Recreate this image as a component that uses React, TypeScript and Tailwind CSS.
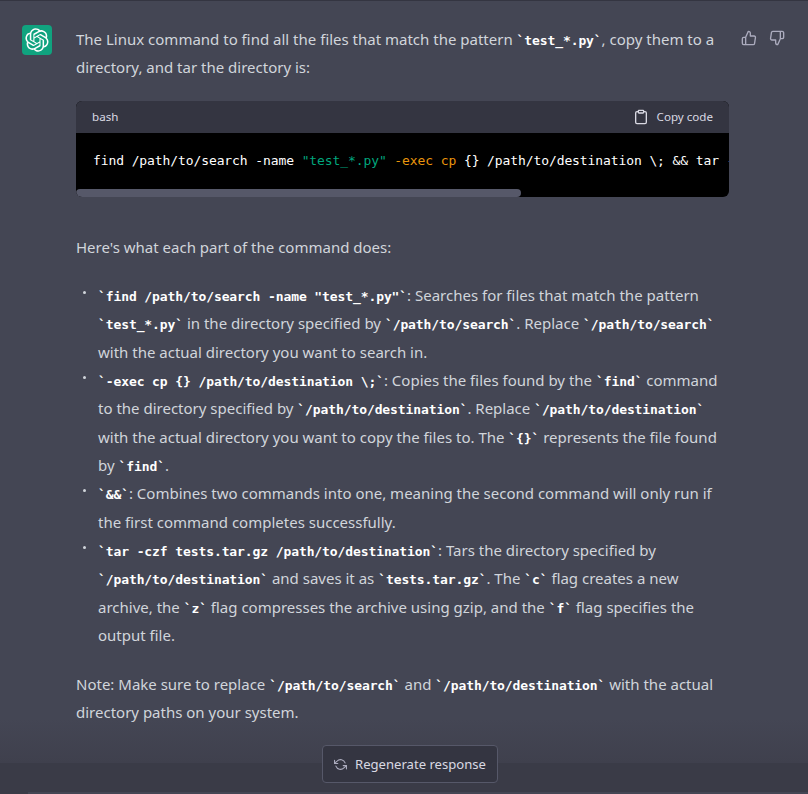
const M = ({ children }: { children: React.ReactNode }) => (
  <code className="font-['DejaVu_Sans_Mono','Liberation_Mono',monospace] font-bold text-white text-[13px] leading-[14px] tracking-[-0.1px]">`{children}`</code>
);

const Logo = () => (
  <svg viewBox="0 0 41 41" width="24" height="24" fill="none">
    <path fill="currentColor" d="M37.5324 16.8707C37.9808 15.5241 38.1363 14.0974 37.9886 12.6859C37.8409 11.2744 37.3934 9.91076 36.676 8.68622C35.6126 6.83404 33.9882 5.3676 32.0373 4.4985C30.0864 3.62941 27.9098 3.40259 25.8215 3.85078C24.8796 2.7893 23.7219 1.94125 22.4257 1.36341C21.1295 0.785575 19.7249 0.491269 18.3058 0.500197C16.1708 0.495044 14.0893 1.16803 12.3614 2.42214C10.6335 3.67624 9.34853 5.44666 8.6917 7.47815C7.30085 7.76286 5.98686 8.3414 4.8377 9.17505C3.68854 10.0087 2.73073 11.0782 2.02839 12.312C0.956464 14.1591 0.498905 16.2988 0.721698 18.4228C0.944492 20.5467 1.83612 22.5449 3.268 24.1293C2.81966 25.4759 2.66413 26.9026 2.81182 28.3141C2.95951 29.7256 3.40701 31.0892 4.12437 32.3138C5.18791 34.1659 6.8123 35.6322 8.76321 36.5013C10.7141 37.3704 12.8907 37.5973 14.9789 37.1492C15.9208 38.2107 17.0786 39.0587 18.3747 39.6366C19.6709 40.2144 21.0755 40.5087 22.4946 40.4998C24.6307 40.5054 26.7133 39.8321 28.4418 38.5772C30.1704 37.3223 31.4556 35.5506 32.1119 33.5179C33.5027 33.2332 34.8167 32.6547 35.9659 31.821C37.115 30.9874 38.0728 29.9178 38.7752 28.684C39.8458 26.8371 40.3023 24.6979 40.0789 22.5748C39.8556 20.4517 38.9639 18.4544 37.5324 16.8707ZM22.4978 37.8849C20.7443 37.8874 19.0459 37.2733 17.6994 36.1501C17.7601 36.117 17.8666 36.0586 17.936 36.0161L25.9004 31.4156C26.1003 31.3019 26.2663 31.137 26.3813 30.9378C26.4964 30.7386 26.5563 30.5124 26.5549 30.2825V19.0542L29.9213 20.998C29.9389 21.0068 29.9541 21.0198 29.9656 21.0359C29.977 21.052 29.9842 21.0707 29.9867 21.0902V30.3889C29.9842 32.375 29.1946 34.2791 27.7909 35.6841C26.3872 37.0892 24.4838 37.8806 22.4978 37.8849ZM6.39227 31.0064C5.51397 29.4888 5.19742 27.7107 5.49804 25.9832C5.55718 26.0187 5.66048 26.0818 5.73461 26.1244L13.699 30.7248C13.8975 30.8408 14.1233 30.902 14.3532 30.902C14.583 30.902 14.8088 30.8408 15.0073 30.7248L24.731 25.1103V28.9979C24.7321 29.0177 24.7283 29.0376 24.7199 29.0556C24.7115 29.0736 24.6988 29.0893 24.6829 29.1012L16.6317 33.7497C14.9096 34.7416 12.8643 35.0097 10.9447 34.4954C9.02506 33.9811 7.38785 32.7263 6.39227 31.0064ZM4.29707 13.6194C5.17156 12.0998 6.55279 10.9364 8.19885 10.3327C8.19885 10.4013 8.19491 10.5228 8.19491 10.6071V19.808C8.19351 20.0378 8.25334 20.2638 8.36823 20.4629C8.48312 20.6619 8.64893 20.8267 8.84863 20.9404L18.5723 26.5542L15.206 28.4979C15.1894 28.5089 15.1703 28.5155 15.1505 28.5173C15.1307 28.5191 15.1107 28.516 15.0924 28.5082L7.04046 23.8557C5.32135 22.8601 4.06716 21.2235 3.55289 19.3046C3.03862 17.3858 3.30624 15.3413 4.29707 13.6194ZM31.955 20.0556L22.2312 14.4411L25.5976 12.4981C25.6142 12.4872 25.6333 12.4805 25.6531 12.4787C25.6729 12.4769 25.6928 12.4801 25.7111 12.4879L33.7631 17.1364C34.9967 17.849 36.0017 18.8982 36.6606 20.1613C37.3194 21.4244 37.6047 22.849 37.4832 24.2684C37.3617 25.6878 36.8382 27.0432 35.9743 28.1759C35.1103 29.3086 33.9415 30.1717 32.6047 30.6641C32.6047 30.5947 32.6047 30.4733 32.6047 30.3889V21.188C32.6066 20.9586 32.5474 20.7328 32.4332 20.5338C32.319 20.3348 32.154 20.1698 31.955 20.0556ZM35.3055 15.0128C35.2464 14.9765 35.1431 14.9142 35.069 14.8717L27.1045 10.2712C26.906 10.1554 26.6803 10.0943 26.4504 10.0943C26.2206 10.0943 25.9948 10.1554 25.7963 10.2712L16.0726 15.8858V11.9982C16.0715 11.9783 16.0753 11.9585 16.0837 11.9405C16.0921 11.9225 16.1048 11.9068 16.1207 11.8949L24.1719 7.25025C25.4053 6.53903 26.8158 6.19376 28.2383 6.25482C29.6608 6.31589 31.0364 6.78077 32.2044 7.59508C33.3723 8.40939 34.2842 9.53945 34.8334 10.8531C35.3826 12.1667 35.5464 13.6095 35.3055 15.0128ZM14.2424 21.9419L10.8752 19.9981C10.8576 19.9893 10.8423 19.9763 10.8309 19.9602C10.8195 19.9441 10.8122 19.9254 10.8098 19.9058V10.6071C10.8107 9.18295 11.2173 7.78848 11.9819 6.58696C12.7466 5.38544 13.8377 4.42659 15.1275 3.82264C16.4173 3.21869 17.8524 2.99464 19.2649 3.1767C20.6775 3.35876 22.0089 3.93941 23.1034 4.85067C23.0427 4.88379 22.937 4.94215 22.8668 4.98473L14.9024 9.58517C14.7025 9.69878 14.5366 9.86356 14.4215 10.0626C14.3065 10.2616 14.2466 10.4877 14.2479 10.7175L14.2424 21.9419ZM16.071 17.9991L20.4018 15.4978L24.7325 17.9975V22.9985L20.4018 25.4983L16.071 22.9985V17.9991Z" />
  </svg>
);

const Thumb = ({ down }: { down?: boolean }) => (
  <svg viewBox="0 0 24 24" width="16" height="16" fill="none" stroke="currentColor" strokeWidth="2" strokeLinecap="round" strokeLinejoin="round">
    {down ? (
      <path d="M10 15v4a3 3 0 0 0 3 3l4-9V2H5.72a2 2 0 0 0-2 1.7l-1.38 9a2 2 0 0 0 2 2.3zm7-13h2.67A2.31 2.31 0 0 1 22 4v7a2.31 2.31 0 0 1-2.33 2H17" />
    ) : (
      <path d="M14 9V5a3 3 0 0 0-3-3l-4 9v11h11.28a2 2 0 0 0 2-1.7l1.38-9a2 2 0 0 0-2-2.3zM7 22H4a2 2 0 0 1-2-2v-7a2 2 0 0 1 2-2h3" />
    )}
  </svg>
);

const Item = ({ children }: { children: React.ReactNode }) => (
  <li className="relative pl-[22px]">
    <span className="absolute left-[7px] top-[10px] w-[3px] h-[3px] bg-[#d1d5db] rounded-full" />
    {children}
  </li>
);

export default function App() {
  return (
    <div className="relative w-[808px] h-[794px] overflow-hidden bg-[#444654] text-[#d1d5db] text-[15px] leading-[28px] font-['Noto_Sans','Open_Sans',sans-serif]">
      <div className="h-px bg-[#343541]" />
      <div className="flex pl-[22px] pt-6">
        <div className="w-[30px] h-[30px] shrink-0 rounded-sm bg-[#10a37f] text-white flex items-center justify-center">
          <Logo />
        </div>
        <div className="w-[653px] ml-6 shrink-0">
          <p>
            The Linux command to find all the files that match the pattern <M>test_*.py</M>, copy them to a directory, and tar the directory is:
          </p>
          <div className="mt-5 rounded-md overflow-hidden bg-black">
            <div className="h-8 px-4 flex items-center justify-between bg-[#343541] text-[11.6px] leading-4 text-[#d9d9e3]">
              <span>bash</span>
              <span className="flex items-center gap-2">
                <svg viewBox="0 0 24 24" width="16" height="16" fill="none" stroke="currentColor" strokeWidth="2" strokeLinecap="round" strokeLinejoin="round">
                  <path d="M16 4h2a2 2 0 0 1 2 2v14a2 2 0 0 1-2 2H6a2 2 0 0 1-2-2V6a2 2 0 0 1 2-2h2" />
                  <rect x="8" y="2" width="8" height="4" rx="1" ry="1" />
                </svg>
                Copy code
              </span>
            </div>
            <div className="pl-[17px] pr-4 py-4 h-14 overflow-hidden whitespace-pre text-white font-['DejaVu_Sans_Mono','Liberation_Mono',monospace] text-[13px] leading-6 tracking-[-0.1px]">
              find /path/to/search -name <span className="text-[#00a67d]">"test_*.py"</span> <span className="text-[#e9950c]">-exec cp</span> {"{}"} /path/to/destination \; && tar -czf tests.tar.gz /path/to/destination
            </div>
            <div className="h-2 w-[445px] rounded-full bg-[#565869]" />
          </div>
          <p className="mt-9">Here's what each part of the command does:</p>
          <ul className="mt-[20px] leading-[28.35px]">
            <Item>
              <M>find /path/to/search -name "test_*.py"</M>: Searches for files that match the pattern <M>test_*.py</M> in the directory specified by <M>/path/to/search</M>. Replace <M>/path/to/search</M> with the actual directory you want to search in.
            </Item>
            <Item>
              <M>-exec cp {"{}"} /path/to/destination \;</M>: Copies the files found by the <M>find</M> command to the directory specified by <M>/path/to/destination</M>. Replace <M>/path/to/destination</M> with the actual directory you want to copy the files to. The <M>{"{}"}</M> represents the file found by <M>find</M>.
            </Item>
            <Item>
              <M>&&</M>: Combines two commands into one, meaning the second command will only run if the first command completes successfully.
            </Item>
            <Item>
              <M>tar -czf tests.tar.gz /path/to/destination</M>: Tars the directory specified by <M>/path/to/destination</M> and saves it as <M>tests.tar.gz</M>. The <M>c</M> flag creates a new archive, the <M>z</M> flag compresses the archive using gzip, and the <M>f</M> flag specifies the output file.
            </Item>
          </ul>
          <p className="mt-[21px]">
            Note: Make sure to replace <M>/path/to/search</M> and <M>/path/to/destination</M> with the actual directory paths on your system.
          </p>
        </div>
        <div className="ml-3 flex gap-3 text-[#acacbe] pt-[5px]">
          <Thumb />
          <Thumb down />
        </div>
      </div>
      <div className="absolute left-0 right-0 bottom-0 h-[75px] flex flex-col justify-end pointer-events-none">
        <div className="flex-1 bg-gradient-to-b from-[#444654]/0 to-[#3f404d]" />
        <div className="h-[29px] bg-[#3a3b47]" />
        <div className="h-[2px] bg-[#3a3b47] pl-7"><div className="h-full bg-[#444654]" /></div>
      </div>
      <div className="absolute left-[322px] top-[745px] w-[176px] h-[38px] rounded border border-[#565869] bg-[#343541] flex items-center justify-center gap-2 text-[13.1px] leading-5 text-[#d9d9e3]">
        <svg viewBox="0 0 24 24" width="13" height="13" fill="none" stroke="#acacbe" strokeWidth="2" strokeLinecap="round" strokeLinejoin="round">
          <polyline points="1 4 1 10 7 10" />
          <polyline points="23 20 23 14 17 14" />
          <path d="M20.49 9A9 9 0 0 0 5.64 5.64L1 10m22 4l-4.64 4.36A9 9 0 0 1 3.51 15" />
        </svg>
        Regenerate response
      </div>
    </div>
  );
}
